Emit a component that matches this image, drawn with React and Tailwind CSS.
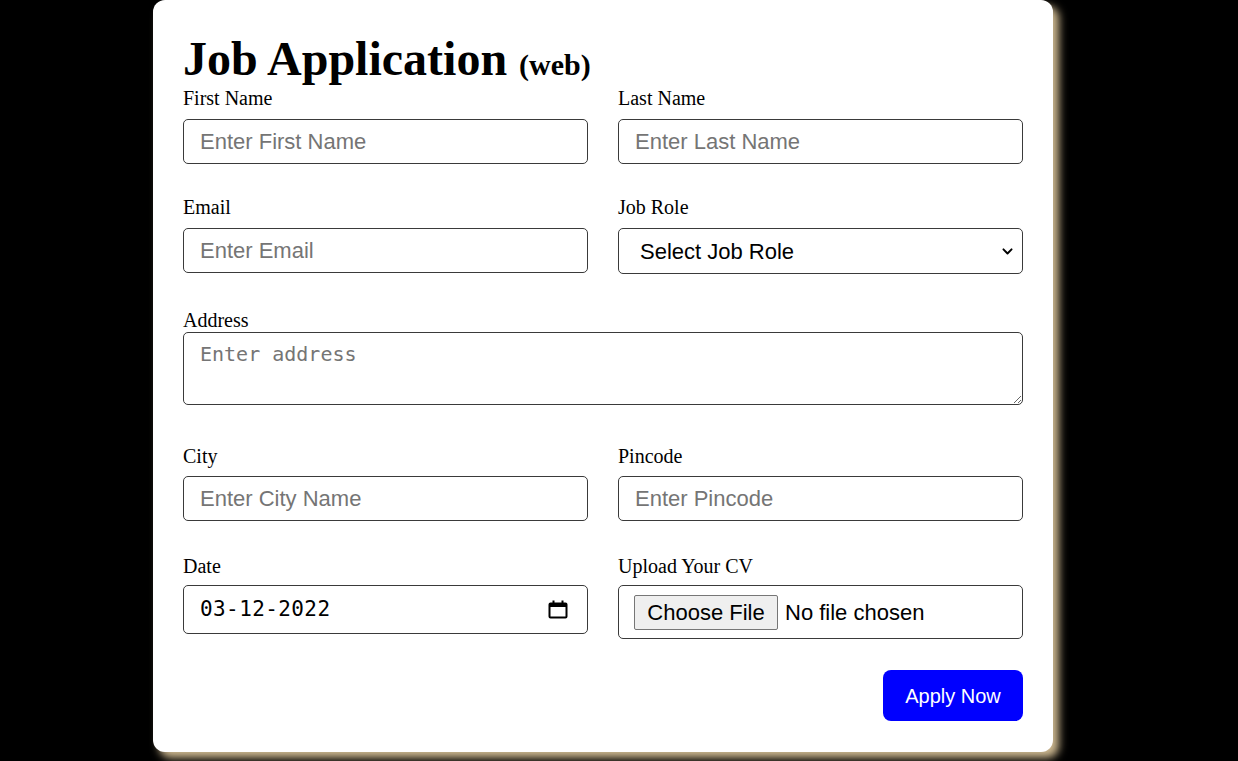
import React, { useState } from "react";

const serif = "font-['Liberation_Serif','Times_New_Roman',serif]";
const sans = "font-['Liberation_Sans',Arial,sans-serif]";
const mono = "font-['DejaVu_Sans_Mono',monospace]";

const inputClass = `w-full h-[45px] border border-[#3a3a3a] rounded-[5px] px-[16px] text-[22px] ${sans} text-black placeholder:text-[#757575] bg-white outline-none`;

function Field({ label, mb = "mb-[9px]", children }) {
  return (
    <div className="flex flex-col">
      <label className={`block text-[20px] leading-[23px] text-black ${serif} ${mb}`}>
        {label}
      </label>
      {children}
    </div>
  );
}

export default function App() {
  const [role, setRole] = useState("");

  return (
    <div className="min-h-screen bg-black pl-[153px]">
      <div className="w-[900px] bg-white rounded-[12px] shadow-[6px_6px_9px_#cdb890] pt-[35px] pb-[31px] px-[30px]">
        <h1 className={`${serif} font-bold text-[48px] leading-[48px] text-black`}>
          Job Application <span className="text-[30px]">(web)</span>
        </h1>

        <form onSubmit={(e) => e.preventDefault()}>
          <div className="grid grid-cols-2 gap-x-[30px] items-start -mt-[2px]">
            <Field label="First Name">
              <input type="text" placeholder="Enter First Name" className={inputClass} />
            </Field>
            <Field label="Last Name">
              <input type="text" placeholder="Enter Last Name" className={inputClass} />
            </Field>
          </div>

          <div className="grid grid-cols-2 gap-x-[30px] items-start mt-[32px]">
            <Field label="Email">
              <input type="email" placeholder="Enter Email" className={inputClass} />
            </Field>
            <Field label="Job Role">
              <div className="relative">
                <select
                  value={role}
                  onChange={(e) => setRole(e.target.value)}
                  className={`w-full h-[46px] appearance-none border border-[#3a3a3a] rounded-[5px] pl-[21px] pr-[40px] text-[22px] ${sans} text-black bg-white outline-none`}
                >
                  <option value="">Select Job Role</option>
                  <option value="frontend">Frontend Developer</option>
                  <option value="backend">Backend Developer</option>
                  <option value="fullstack">Full Stack Developer</option>
                </select>
                <svg
                  className="absolute right-[9px] top-1/2 -translate-y-1/2 w-[13px] h-[13px] pointer-events-none"
                  viewBox="0 0 16 16"
                  fill="none"
                  stroke="#000"
                  strokeWidth="2.4"
                  strokeLinecap="round"
                  strokeLinejoin="round"
                >
                  <path d="M3 6l5 5 5-5" />
                </svg>
              </div>
            </Field>
          </div>

          <div className="mt-[35px]">
            <Field label="Address" mb="mb-0">
              <textarea
                placeholder="Enter address"
                className={`w-full h-[73px] block border border-[#3a3a3a] rounded-[5px] px-[16px] pt-[9px] text-[20px] leading-[24px] ${mono} text-black placeholder:text-[#757575] bg-white outline-none`}
              />
            </Field>
          </div>

          <div className="grid grid-cols-2 gap-x-[30px] items-start mt-[40px]">
            <Field label="City" mb="mb-[8px]">
              <input type="text" placeholder="Enter City Name" className={inputClass} />
            </Field>
            <Field label="Pincode" mb="mb-[8px]">
              <input type="text" placeholder="Enter Pincode" className={inputClass} />
            </Field>
          </div>

          <div className="grid grid-cols-2 gap-x-[30px] items-start mt-[34px]">
            <Field label="Date" mb="mb-[7px]">
              <div className="h-[49px] border border-[#3a3a3a] rounded-[5px] pl-[16px] pr-[19px] flex items-center justify-between bg-white">
                <span className={`${mono} text-[21px] tracking-[0.4px] text-black`}>03-12-2022</span>
                <svg width="20" height="19" viewBox="0 0 20 19" fill="none">
                  <rect x="1.5" y="3.5" width="17" height="14" rx="1" stroke="#000" strokeWidth="2" />
                  <rect x="1.5" y="3.5" width="17" height="3.5" fill="#000" />
                  <rect x="4.5" y="0.5" width="2" height="4" fill="#000" />
                  <rect x="13.5" y="0.5" width="2" height="4" fill="#000" />
                </svg>
              </div>
            </Field>
            <Field label="Upload Your CV" mb="mb-[7px]">
              <div className="h-[54px] border border-[#3a3a3a] rounded-[5px] pl-[15px] flex items-center bg-white">
                <button
                  type="button"
                  className={`h-[35px] w-[144px] bg-[#efefef] border border-[#767676] rounded-[2px] text-[22px] ${sans} text-black`}
                >
                  Choose File
                </button>
                <span className={`ml-[7px] text-[22px] ${sans} text-black`}>No file chosen</span>
              </div>
            </Field>
          </div>

          <div className="flex justify-end mt-[31px]">
            <button
              type="submit"
              className={`w-[140px] h-[51px] bg-[#0000ff] text-white rounded-[8px] text-[20px] ${sans}`}
            >
              Apply Now
            </button>
          </div>
        </form>
      </div>
    </div>
  );
}
